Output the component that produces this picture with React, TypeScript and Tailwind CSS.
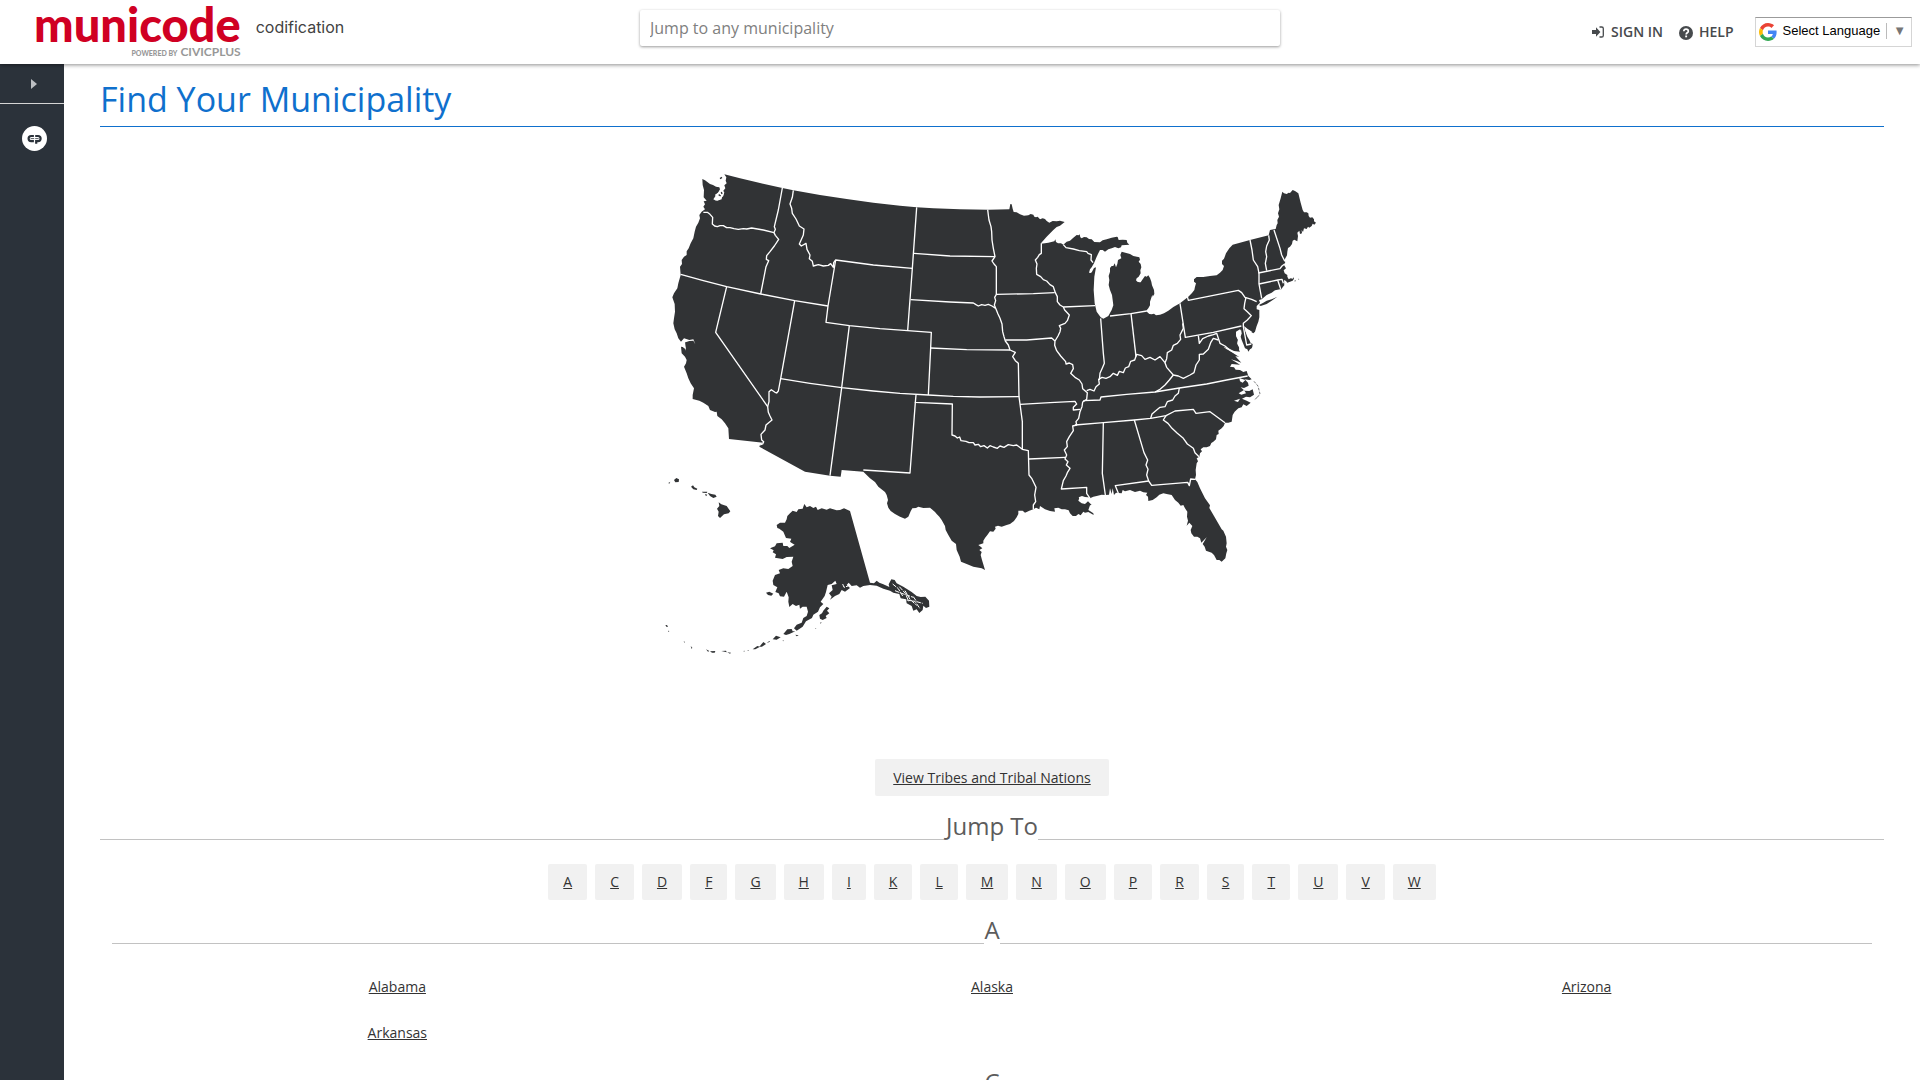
import React from "react";

const letters = ["A", "C", "D", "F", "G", "H", "I", "K", "L", "M", "N", "O", "P", "R", "S", "T", "U", "V", "W"];

const sections = [
  { letter: "A", states: ["Alabama", "Alaska", "Arizona", "Arkansas"] },
  { letter: "C", states: ["California", "Colorado", "Connecticut"] },
];

const mainland =
  "127,57 135,61 150,72 159,75 168,80 178,82 180,88 174,98 165,104 168,110 162,116 172,122 185,118 186,110 192,100 190,92 196,85 193,76 200,70 197,62 199,52 193,43 240,55 300,69 367,84 400,91 480,105 560,117 640,128 720,137 770,142 820,145 900,148 985,149 1048,148 1051,132 1055,133 1058,146 1061,156 1070,157 1080,163 1092,167 1105,166 1112,162 1120,164 1123,170 1128,172 1133,170 1140,178 1148,175 1155,177 1160,183 1168,188 1178,183 1190,184 1200,182 1214,186 1200,197 1190,201 1180,210 1160,230 1144,248 1144,251 1165,248 1183,244 1186,238 1188,246 1194,250 1203,250 1210,254 1220,245 1230,242 1240,233 1250,225 1256,226 1259,223 1261,232 1265,235 1272,231 1280,232 1287,237 1295,238 1303,246 1320,247 1328,241 1340,238 1355,233 1370,230 1373,231 1376,240 1388,239 1400,240 1402,248 1408,254 1385,256 1383,262 1375,265 1365,261 1355,265 1345,268 1335,275 1328,270 1320,270 1315,280 1310,290 1302,310 1295,322 1290,328 1287,338 1293,339 1296,335 1302,324 1308,322 1303,350 1301,390 1304,430 1310,455 1322,472 1330,476 1345,468 1355,450 1360,436 1358,420 1356,405 1350,390 1346,375 1348,360 1346,348 1350,335 1350,324 1355,318 1360,318 1364,310 1368,322 1372,312 1374,300 1384,295 1381,285 1385,275 1410,282 1420,288 1438,292 1440,299 1436,305 1442,312 1444,322 1441,331 1442,340 1436,350 1430,355 1428,361 1432,365 1438,367 1442,367 1448,358 1455,348 1460,350 1465,346 1470,354 1474,365 1476,376 1482,390 1483,402 1478,410 1477,404 1470,425 1470,436 1465,445 1458,453 1468,462 1475,463 1482,461 1488,466 1500,464 1512,460 1525,452 1540,441 1560,430 1585,410 1596,399 1603,390 1605,380 1608,370 1602,365 1602,358 1610,351 1630,351 1650,348 1670,346 1680,338 1688,330 1692,318 1686,312 1686,302 1692,296 1698,280 1708,265 1718,254 1770,240 1826,226 1830,210 1842,208 1847,207 1850,195 1853,190 1852,180 1857,170 1854,160 1858,148 1856,135 1862,115 1867,95 1872,100 1880,102 1886,98 1890,99 1898,90 1905,93 1915,100 1922,128 1928,150 1932,157 1940,157 1945,160 1946,168 1950,173 1957,172 1962,178 1962,184 1968,188 1963,194 1958,191 1955,198 1948,203 1944,200 1940,207 1932,205 1929,216 1925,210 1926,220 1920,222 1918,212 1912,218 1914,228 1912,244 1903,239 1898,242 1896,252 1890,260 1884,264 1882,275 1881,286 1876,295 1872,303 1876,306 1872,315 1878,325 1871,331 1874,340 1882,345 1882,350 1886,358 1892,355 1899,356 1900,351 1902,356 1898,362 1882,368 1878,363 1872,360 1873,376 1868,382 1864,388 1860,388 1845,391 1835,398 1820,405 1805,418 1797,420 1800,428 1790,438 1790,448 1798,450 1798,460 1798,472 1795,485 1790,498 1785,515 1780,520 1775,517 1770,512 1760,508 1754,502 1758,520 1762,530 1768,540 1772,549 1778,552 1777,560 1775,565 1770,568 1765,575 1762,568 1755,565 1750,552 1745,540 1742,530 1745,520 1743,508 1738,515 1728,522 1729,530 1734,540 1732,550 1738,560 1737,570 1740,575 1722,573 1708,566 1690,560 1700,568 1722,579 1740,590 1726,589 1744,608 1730,603 1713,598 1728,607 1740,614 1715,612 1710,620 1722,622 1727,629 1740,630 1750,636 1760,633 1765,648 1775,658 1768,660 1754,658 1764,668 1766,677 1752,684 1742,682 1754,692 1768,693 1778,688 1782,704 1770,712 1758,710 1746,716 1760,722 1772,728 1760,738 1750,733 1745,742 1735,745 1724,755 1718,765 1715,785 1705,788 1695,788 1691,798 1685,805 1675,812 1676,822 1670,825 1668,838 1660,845 1654,849 1650,858 1640,862 1630,862 1622,868 1626,874 1620,880 1618,890 1610,895 1614,904 1610,910 1607,930 1608,945 1605,958 1612,966 1620,985 1635,1015 1650,1036 1648,1044 1662,1068 1685,1108 1690,1112 1698,1130 1700,1150 1698,1160 1702,1170 1699,1180 1696,1195 1685,1205 1678,1200 1670,1200 1662,1185 1655,1178 1638,1172 1634,1160 1628,1152 1640,1132 1632,1140 1624,1148 1620,1135 1612,1130 1602,1130 1594,1120 1592,1110 1597,1098 1588,1088 1580,1097 1584,1082 1581,1070 1582,1055 1575,1045 1570,1035 1562,1037 1555,1028 1545,1020 1535,1005 1520,1002 1510,1000 1498,1004 1490,1012 1478,1020 1465,1023 1464,1010 1458,1005 1462,998 1450,997 1440,992 1425,996 1410,990 1395,994 1388,990 1385,1000 1375,999 1368,998 1362,1005 1358,985 1355,1002 1350,985 1347,1004 1336,1005 1325,1004 1310,1008 1300,1010 1290,1015 1286,1012 1265,1012 1258,1014 1255,1022 1265,1030 1275,1032 1284,1024 1295,1035 1290,1036 1285,1050 1300,1060 1301,1065 1285,1056 1275,1058 1270,1055 1262,1066 1255,1062 1248,1068 1238,1068 1230,1060 1226,1051 1215,1048 1205,1048 1195,1043 1183,1045 1185,1055 1170,1053 1155,1048 1140,1038 1138,1048 1128,1043 1120,1048 1108,1052 1095,1058 1088,1052 1075,1052 1075,1062 1070,1072 1062,1083 1050,1092 1040,1095 1025,1100 1014,1097 1005,1100 1007,1106 1000,1115 990,1114 982,1125 975,1134 970,1142 970,1150 955,1155 962,1160 967,1165 958,1170 965,1176 962,1185 966,1200 975,1230 965,1225 940,1220 920,1212 903,1205 899,1190 890,1170 888,1152 885,1150 875,1142 865,1125 857,1110 855,1098 845,1080 838,1070 830,1062 825,1056 810,1043 790,1044 775,1040 768,1044 757,1045 752,1054 745,1070 735,1076 720,1070 705,1062 692,1053 685,1043 681,1030 684,1020 680,1005 675,996 655,980 645,966 630,955 620,945 610,935 545,930 542,950 510,947 435,935 298,860 300,855 310,848 207,837 205,805 195,790 185,778 172,768 170,755 165,756 150,750 145,738 130,728 118,722 98,717 98,705 102,685 92,670 85,655 80,640 72,620 78,610 80,600 75,590 65,580 63,560 72,562 78,572 72,548 88,543 100,542 106,553 100,538 88,540 72,535 63,545 55,535 50,520 44,508 40,490 42,475 45,455 44,432 37,412 42,400 52,385 55,370 62,345 60,320 66,312 65,300 72,290 80,285 80,274 86,265 92,250 100,235 104,215 108,200 115,188 120,175 118,165 125,155 135,148 130,140 135,133 131,124 140,122 131,112 132,90 128,75";

// shared state lines, drawn over the silhouette
const borders = [
  "130,157 142,157 150,163 158,172 157,192 164,198 172,200 180,197 190,197 200,203 210,203 222,206 235,208 250,206 260,207 275,204 310,210 342,218",
  "367,84 355,150 343,200 346,208 342,218 346,226 356,238 343,258 330,275 320,287 319,298 326,302 318,320 302,402",
  "62,343 130,362 200,380 302,402 404,422 504,438",
  "200,380 167,517 323,740 325,757 330,768 336,780 326,788 318,795 315,810 303,823 305,840 311,845 308,852 300,855",
  "323,740 327,725 327,695 334,689 345,697 350,699 355,693 362,656 404,422",
  "362,656 450,670 545,683 640,693 720,700 805,705 880,709 960,711 1077,710",
  "400,91 397,112 390,132 395,145 397,160 408,177 418,198 432,207 430,225 418,252 424,258 438,250 441,268 450,285 448,296 457,304 460,318 475,314 490,318 505,316 512,311 520,322 521,308 527,300 640,315 757,325",
  "527,300 504,438 498,487 568,497 660,506 743,512 814,517 812,563 805,705",
  "568,497 545,683 510,947",
  "770,142 757,325 743,512",
  "762,280 870,288 1005,290",
  "752,419 870,426 940,429 948,434 955,438 965,434 975,436 985,433 996,438 1007,445",
  "812,564 920,569 1050,570",
  "983,149 985,165 987,180 993,200 995,215 996,240 1000,265 1005,290 996,303 1002,312 1009,320 1009,403 1004,412 1007,422 1003,435 1007,445 1014,462 1020,475 1026,492 1028,515 1032,530 1036,543 1045,555 1050,570 1066,577 1058,590 1066,602 1075,610 1077,710 1080,732 1087,785 1087,868",
  "1009,403 1120,401 1184,398",
  "1144,250 1144,280 1138,284 1133,292 1126,300 1131,312 1129,325 1130,343 1142,350 1150,359 1160,363 1170,374 1180,380 1186,398 1192,410 1192,425 1200,435 1210,441 1214,450 1228,465 1222,482 1215,490 1198,497 1202,505 1200,515 1194,528 1185,543 1184,556 1190,572 1202,588 1217,605 1218,612 1228,609 1238,614 1240,626 1232,640 1245,652 1258,660 1266,672 1268,686 1282,698 1280,718 1268,726 1266,740 1260,755 1256,775 1248,785 1250,795 1238,798 1240,812 1228,830 1220,845 1222,860 1213,870 1220,885 1215,897 1224,905 1219,915 1230,925 1222,938 1218,948 1210,962 1204,987 1280,982 1280,1000 1290,1015",
  "1036,540 1100,540 1175,534 1185,543",
  "1210,441 1305,437",
  "1210,254 1218,263 1240,267 1258,272 1280,275 1284,280 1294,284 1293,300 1299,308",
  "1080,733 1170,728 1245,724 1250,732 1240,742 1240,750 1260,748",
  "1107,897 1215,892",
  "768,705 766,727 877,732 876,825 885,828 892,834 899,831 903,842 918,844 927,848 940,848 945,855 955,853 962,860 972,857 982,864 990,857 1000,861 1012,865 1020,858 1032,862 1045,854 1060,857 1070,855 1087,868 1105,872 1107,945 1115,955 1128,982 1124,1005 1127,1025 1120,1035 1120,1048",
  "766,727 750,939 610,930",
  "1322,475 1330,580 1333,610 1327,624 1320,640 1318,660",
  "1280,692 1290,688 1302,693 1308,680 1318,672 1316,658 1326,652 1338,655 1350,650 1360,640 1372,646 1378,634 1390,638 1396,624 1406,620 1412,604 1424,600 1430,583 1445,587 1455,598 1470,592 1485,600 1500,590 1515,608 1520,596 1522,578 1535,570 1540,556 1552,550 1562,538 1560,525 1570,505 1568,490",
  "1413,460 1428,590",
  "1350,468 1413,461 1460,453",
  "1560,430 1576,532 1660,517 1744,498",
  "1582,410 1585,421 1735,391 1745,398 1755,412 1775,418 1790,425",
  "1758,412 1754,430 1752,446 1762,455 1774,467 1762,480 1750,490 1750,500 1760,555 1774,552",
  "1515,608 1520,622 1540,645 1555,648 1570,655 1590,645 1602,638 1608,615 1618,600 1618,583 1630,582 1645,568 1652,548 1660,535 1675,540",
  "1615,527 1618,550 1628,536 1645,528 1660,524 1670,520 1680,550 1695,558 1712,572 1740,590",
  "1540,645 1528,660 1515,675 1500,688 1485,696",
  "1270,722 1320,720 1323,711 1400,703 1485,696 1558,684 1640,672 1700,660 1763,648",
  "1245,795 1330,788 1423,780 1472,775 1518,767 1545,753 1600,748 1608,760 1650,755 1695,788",
  "1558,684 1555,700 1545,708 1538,720 1522,725 1515,740 1500,742 1490,750 1476,762 1472,775",
  "1518,767 1510,780 1524,790 1536,805 1552,820 1570,835 1582,852 1600,865 1605,878 1617,890",
  "1330,788 1327,940 1336,1005",
  "1423,780 1452,878 1463,900 1458,915 1464,928 1460,945 1466,963 1475,976 1583,967 1588,977 1592,957 1606,958",
  "1375,1000 1366,977 1466,963",
  "1770,240 1776,270 1780,300 1793,320 1797,340 1797,372 1805,415",
  "1826,226 1828,240 1820,258 1817,275 1820,290 1816,310 1820,332",
  "1842,210 1860,265 1865,285 1874,303",
  "1795,339 1860,326 1866,318 1874,312",
  "1797,372 1853,360 1866,358 1870,370",
  "1853,360 1862,387",
];

// inlets, bays and coastal ponds
const water = [
  "174,98 184,92 193,96 190,108 180,118 168,122 160,118 168,106",
  "180,62 187,56 190,62 184,68",
  "1728,515 1740,508 1744,522 1736,530 1742,548 1748,560 1740,568 1732,552 1734,538 1728,526",
  "1752,498 1762,506 1776,515 1768,520 1757,516",
  "1738,654 1756,660 1748,668 1740,664",
  "1736,700 1752,690 1758,700 1744,704",
  "1722,722 1740,716 1734,726",
  "1256,1012 1266,1008 1284,1014 1278,1028 1262,1024",
  "64,546 74,540 78,568 70,562",
];

const alaska =
  "380,195 390,188 405,188 410,178 412,168 420,160 428,152 440,156 445,148 458,146 460,140 463,132 470,142 480,138 490,144 498,140 503,150 515,145 530,149 540,145 560,151 570,150 582,145 600,153 660,368 672,370 680,362 688,368 700,373 718,381 716,373 724,358 734,360 740,370 760,380 785,396 800,408 812,411 826,410 837,422 838,440 828,444 820,437 818,450 808,459 800,448 790,452 785,438 770,430 768,418 752,415 748,402 730,398 720,392 700,386 680,377 660,375 640,378 630,383 620,376 605,378 596,368 590,375 600,384 585,395 575,390 568,402 555,408 540,419 545,410 537,400 548,390 545,376 560,372 556,362 545,372 533,375 528,396 524,408 512,425 520,432 510,442 504,455 490,464 486,474 468,484 458,500 440,512 432,505 440,494 455,488 460,474 470,468 474,455 470,440 458,440 450,446 448,434 438,438 428,432 418,441 415,425 416,412 410,395 402,410 390,409 386,400 376,396 382,382 370,375 368,362 375,345 390,340 386,330 400,325 415,327 428,318 425,305 430,290 410,291 398,297 375,293 378,283 368,277 371,271 360,265 375,259 380,250 398,248 400,258 412,258 418,264 434,254 420,246 424,236 408,234 400,215 388,206 382,204";

const islands = [
  "508,465 516,460 520,452 530,440 538,445 531,452 538,460 527,468 530,474 518,480 510,476",
  "348,398 358,395 370,401 364,407 354,405",
  "400,522 412,508 425,507 428,514 436,514 418,522 408,525",
  "368,538 378,527 392,532 380,539",
  "308,568 322,558 330,560 316,568",
  "328,560 340,546 348,552 336,560",
  "350,549 358,543 360,545",
  "168,568 178,573 174,575",
  "180,574 196,573 194,578 186,578",
  "214,573 228,572 230,577",
  "232,577 243,578 240,581",
  "46,496 51,495 54,500 50,501",
  "54,512 58,513 56,516",
  "101,544 105,546 103,548",
  "122,558 127,563 125,567",
  "280,573 284,572 283,575",
  "292,571 296,570 295,573",
  "398,541 402,542 399,544",
  "436,524 446,526 440,529",
  "496,504 499,505 497,507",
  "510,488 515,487 512,491",
  "72,60 79,54 87,58 86,66 76,67",
  "55,69 61,65 58,71",
  "123,80 129,76 133,82 142,86 140,90 130,88",
  "156,95 172,95 170,99 158,98",
  "165,102 172,104 168,109",
  "173,98 184,102 196,104 200,110 190,114 180,108",
  "206,127 214,133 230,138 241,154 236,160 222,163 210,174 204,168 206,155 201,146 208,138",
];

const channels = [
  "728,372 745,386 758,408",
  "748,380 766,400 776,424",
  "765,392 780,418 800,436",
  "790,410 800,425 818,430",
  "735,392 755,400 790,412",
  "770,420 795,424 810,446",
  "578,372 582,382 594,378",
  "402,240 412,246 424,250",
];

function SectionHeading({ children }: { children: React.ReactNode }) {
  return (
    <h2 className="flex items-end text-2xl leading-8 text-[#5c5c5c]">
      <span className="mb-[2px] h-px flex-1 bg-[#c2c2c2]" />
      {children}
      <span className="mb-[2px] h-px flex-1 bg-[#c2c2c2]" />
    </h2>
  );
}

function StateMap() {
  return (
    <svg viewBox="-24 0 2040 1560" className="w-[680px] max-w-full" fill="#313335" role="img" aria-label="Map of the United States">
      <polygon points={mainland} />
      <polygon points="1797,435 1810,428 1820,422 1835,418 1852,410 1835,422 1820,432 1802,438" />
      <polygon points="1903,362 1908,361 1905,365" />
      <polygon points="1914,356 1918,357 1916,359" />
      <path d="M1782 664l12 14 6 24-8 10M1792 712l-10 8" fill="none" stroke="#313335" strokeWidth="2" strokeDasharray="8 4" />
      <g fill="#fff">
        {water.map((points) => (
          <polygon key={points} points={points} />
        ))}
      </g>
      <path d="M186 52l-6 4M176 104l6 4M184 96l2 6" fill="none" stroke="#313335" strokeWidth="4" />
      <g fill="none" stroke="#fff" strokeWidth="4" strokeLinejoin="round">
        {borders.map((points) => (
          <polyline key={points} points={points} />
        ))}
      </g>
      <g transform="translate(-30 900)">
        <polygon points={alaska} />
        {islands.map((points) => (
          <polygon key={points} points={points} />
        ))}
        <g fill="none" stroke="#fff" strokeWidth="3">
          {channels.map((points) => (
            <polyline key={points} points={points} strokeDasharray="14 3" />
          ))}
        </g>
      </g>
    </svg>
  );
}

function Header() {
  return (
    <header className="relative z-10 grid h-16 shrink-0 grid-cols-3 bg-white shadow-[0_1px_4px_rgba(0,0,0,0.45)]">
      <div className="flex items-start pl-[34px]">
        <a href="#home" className="flex flex-col items-end font-['Lato']">
          <span className="text-[47px] leading-[48px] font-black text-[#d00023]">municode</span>
          <span className="-mt-1 text-xs leading-4 font-bold text-[#989898]">
            <span className="text-[7px] font-black">POWERED BY</span> CIVICPLUS
          </span>
        </a>
        <span className="pt-[15px] pl-[15px] font-['Inter'] text-base leading-6 text-[#424242]">codification</span>
      </div>
      <div className="pt-[10px]">
        <input
          type="text"
          aria-label="Jump to any municipality"
          placeholder="Jump to any municipality"
          className="h-9 w-full rounded-xs bg-white px-[10px] text-base shadow-[0_1px_3px_rgba(0,0,0,0.4)] outline-none placeholder:text-[#808080]"
        />
      </div>
      <div className="flex items-start justify-end pr-2">
        <nav className="flex gap-4 pt-[22px] text-sm leading-5 font-semibold text-[#474a4d]">
          <a href="#signin" className="flex items-center gap-[7px]">
            <svg viewBox="0 0 12 12" className="size-3">
              <path d="M0 4h4V1.2L8.4 6 4 10.800V8H0z" fill="currentColor" />
              <path d="M7.500 1h2.200a1.600 1.600 0 0 1 1.600 1.600v6.800a1.600 1.600 0 0 1-1.600 1.600H7.500" fill="none" stroke="currentColor" strokeWidth="1.300" />
            </svg>
            SIGN IN
          </a>
          <a href="#help" className="flex items-center gap-[6px]">
            <svg viewBox="0 0 14 14" className="mt-px size-[14px]">
              <circle cx="7" cy="7" r="7" fill="currentColor" />
              <path d="M4.800 5.300C4.900 3.900 5.800 3.200 7 3.200c1.300 0 2.300.800 2.300 2 0 1.600-2.100 1.600-2.100 3.200" fill="none" stroke="#fff" strokeWidth="1.700" />
              <path d="M6.200 9.500h1.900v1.800H6.200z" fill="#fff" />
            </svg>
            HELP
          </a>
        </nav>
        <button
          type="button"
          className="mt-[17px] ml-[21px] flex h-[30px] items-start border border-[#d5d5d5] border-t-[#9b9b9b] pt-[5px] pr-1 pl-[3px] font-['Liberation_Sans'] text-[13px] leading-4 text-black"
        >
          <svg viewBox="0 0 48 48" className="size-[18px]">
            <path fill="#EA4335" d="M24 9.500c3.540 0 6.710 1.220 9.210 3.600l6.850-6.850C35.900 2.380 30.470 0 24 0 14.620 0 6.510 5.380 2.560 13.220l7.980 6.190C12.430 13.720 17.740 9.500 24 9.500z" />
            <path fill="#4285F4" d="M46.980 24.550c0-1.570-.15-3.090-.38-4.550H24v9.020h12.940c-.58 2.960-2.260 5.480-4.780 7.180l7.730 6c4.510-4.180 7.090-10.360 7.090-17.650z" />
            <path fill="#FBBC05" d="M10.530 28.590c-.48-1.450-.76-2.990-.76-4.590s.27-3.140.76-4.590l-7.980-6.190C.92 16.460 0 20.120 0 24c0 3.880.92 7.540 2.560 10.780l7.970-6.190z" />
            <path fill="#34A853" d="M24 48c6.480 0 11.930-2.130 15.890-5.810l-7.730-6c-2.150 1.450-4.920 2.300-8.160 2.300-6.260 0-11.570-4.220-13.470-9.910l-7.980 6.190C6.510 42.620 14.620 48 24 48z" />
          </svg>
          <span className="ml-[6px]">Select Language</span>
          <span className="ml-[6px] border-l border-[#bbb] pr-px pl-[6px] text-[#767676]">▼</span>
        </button>
      </div>
    </header>
  );
}

export default function App() {
  return (
    <div className="flex h-screen flex-col overflow-hidden bg-white font-['Open_Sans',sans-serif] text-[#333]">
      <Header />
      <div className="flex min-h-0 flex-1">
        <aside className="w-16 shrink-0 bg-[#2b323a]">
          <button type="button" aria-label="Expand sidebar" className="flex h-10 w-full items-center justify-center border-b border-[#d5d5d5]">
            <svg viewBox="0 0 6 10" className="ml-1 h-[10px] w-[6px]" fill="#bcbfc2">
              <path d="M0 0l6 5-6 5z" />
            </svg>
          </button>
          <a href="#civicplus" aria-label="CivicPlus" className="mt-[22px] ml-[22px] block size-[25px]">
            <svg viewBox="0 0 25 25" className="size-[25px]">
              <circle cx="12.500" cy="12.500" r="12.500" fill="#fff" />
              <path d="M11.900 10H9.200a2.600 2.600 0 0 0 0 5.200h2.700" fill="none" stroke="#2b323a" strokeWidth="2.200" />
              <path d="M8.600 12.600h3.600M13.200 12.600h3.400" stroke="#2b323a" strokeWidth="0.800" />
              <path d="M13.200 10h2.800a2.600 2.600 0 0 1 0 5.200h-1.800v2.600" fill="none" stroke="#2b323a" strokeWidth="2.200" />
            </svg>
          </a>
        </aside>
        <main className="min-w-0 flex-1 overflow-y-auto px-9 [scrollbar-width:none]">
          <h1 className="border-b border-[#0f70cd] pt-[11px] pb-[3px] text-[34px] leading-[48px] text-[#0f70cd]">Find Your Municipality</h1>
          <div className="mt-[33px] flex justify-center">
            <StateMap />
          </div>
          <div className="mt-[79px] mb-[14px] flex justify-center">
            <a href="#tribes" className="rounded-xs bg-[#f1f1f1] px-[18px] py-[9px] text-sm leading-[19px] underline">
              View Tribes and Tribal Nations
            </a>
          </div>
          <SectionHeading>Jump To</SectionHeading>
          <nav className="mt-[22px] mb-[14px] flex flex-wrap justify-center gap-2">
            {letters.map((letter) => (
              <a key={letter} href={`#${letter}`} className="rounded-xs bg-[#f1f1f1] px-[15px] py-2 text-sm leading-5 underline">
                {letter}
              </a>
            ))}
          </nav>
          {sections.map((section) => (
            <section key={section.letter} id={section.letter} className="mb-[10px]">
              <div className="px-3">
                <SectionHeading>{section.letter}</SectionHeading>
              </div>
              <ul className="mt-[18px] grid grid-cols-3">
                {section.states.map((state) => (
                  <li key={state} className="flex h-[46px] items-center justify-center">
                    <a href={`#${state}`} className="text-sm leading-5 underline">
                      {state}
                    </a>
                  </li>
                ))}
              </ul>
            </section>
          ))}
        </main>
      </div>
    </div>
  );
}
